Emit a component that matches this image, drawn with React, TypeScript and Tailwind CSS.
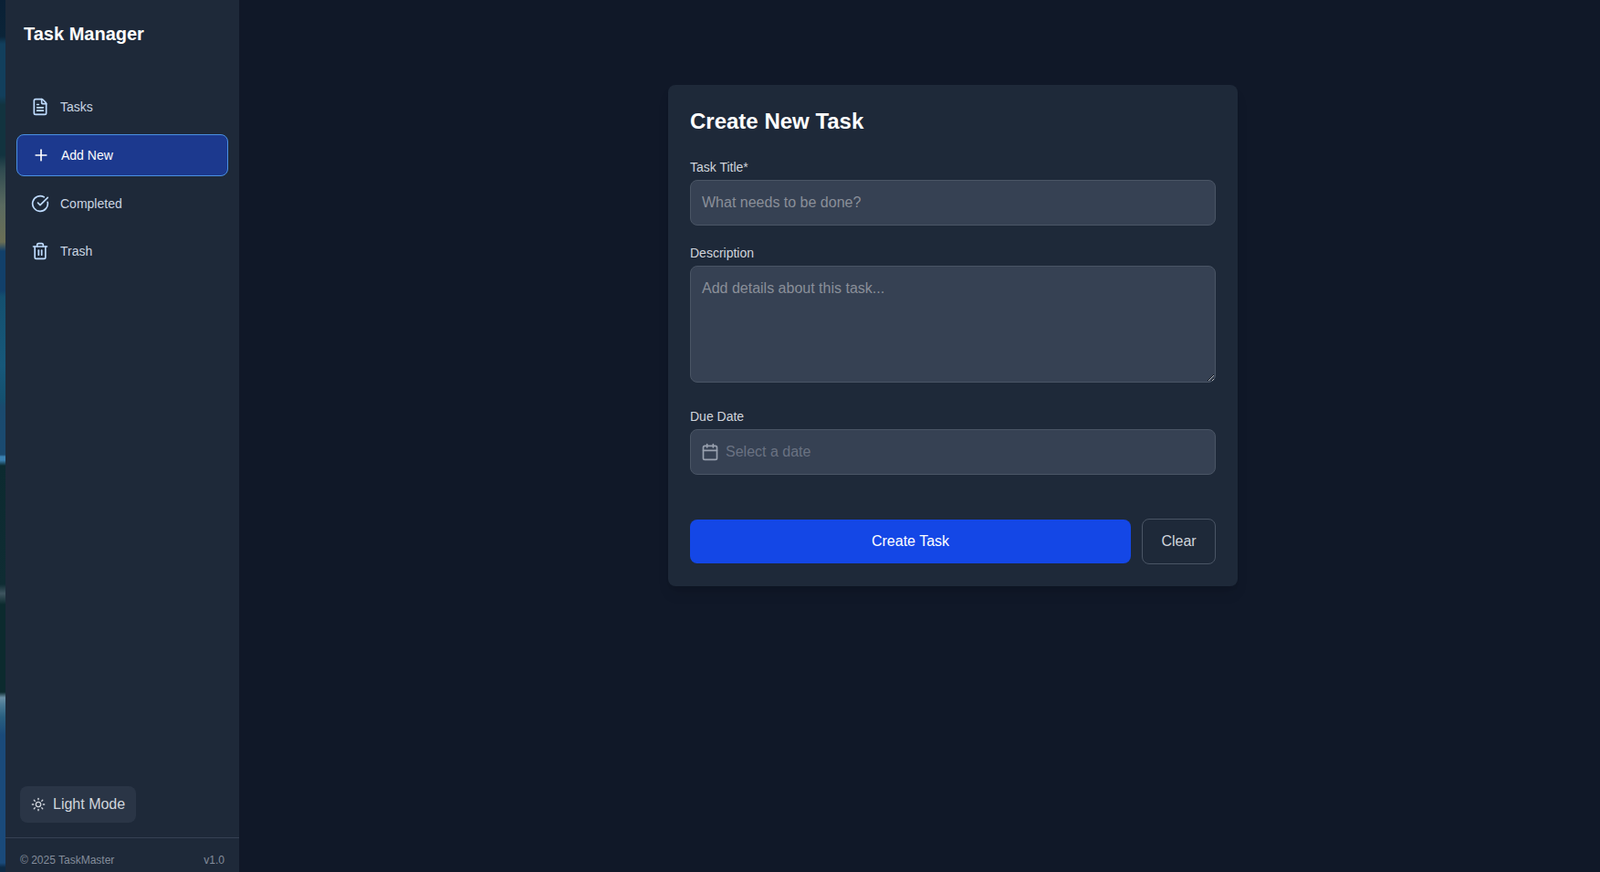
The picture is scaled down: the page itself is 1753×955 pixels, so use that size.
import { FileText, Plus, CircleCheckBig, Trash2, Sun, Calendar } from "lucide-react";

const strip =
  "bg-[linear-gradient(180deg,#0a2035_0px,#0b2438_40px,#123f5c_48px,#123f5c_105px,#12333f_115px,#12333f_170px,#2f4a50_185px,#5a6a60_225px,#6b6f55_265px,#12406a_275px,#12406a_318px,#14506f_325px,#17587a_400px,#14506f_438px,#1a4a6e_445px,#1a4a70_498px,#3a80b0_500px,#3a80b0_504px,#0c2a30_510px,#0f2c33_640px,#3f5560_650px,#0c2a2e_662px,#0c2a2e_758px,#6a8fa5_764px,#4a7a95_772px,#2a6080_785px,#1a4a7a_805px,#1a4a7a_945px,#0d2a45_950px,#0d2a45_955px)]";

function NavItem({ icon, label, active }: { icon: React.ReactNode; label: string; active?: boolean }) {
  return (
    <a
      className={
        active
          ? "flex items-center gap-3 h-[46px] px-4 rounded-lg border border-[#4a90e2] bg-blue-900 text-white text-sm"
          : "flex items-center gap-3 h-[44px] px-4 rounded-lg text-slate-300 text-sm"
      }
    >
      {icon}
      <span>{label}</span>
    </a>
  );
}

const Field = ({ label, children, className }: { label: string; children: React.ReactNode; className: string }) => (
  <div className={className}>
    <label className="block text-sm leading-5 text-gray-300 mb-1">{label}</label>
    {children}
  </div>
);

export default function App() {
  const inputCls =
    "block w-full h-[50px] bg-gray-700 border border-gray-600 rounded-lg text-base text-white outline-none";
  return (
    <div className="flex h-[955px] overflow-hidden bg-gray-900 font-['Liberation_Sans',Arial,sans-serif]">
      <div className={`w-[6px] shrink-0 ${strip}`} />
      <aside className="w-[256px] shrink-0 flex flex-col bg-gray-800">
        <div className="px-5 pt-[23px] pb-[44px]">
          <h1 className="text-xl leading-7 font-bold text-white">Task Manager</h1>
        </div>
        <nav className="flex flex-col gap-2 px-3">
          <NavItem icon={<FileText size={20} className="text-blue-200" />} label="Tasks" />
          <NavItem icon={<Plus size={20} className="text-white" />} label="Add New" active />
          <NavItem icon={<CircleCheckBig size={20} className="text-blue-200" />} label="Completed" />
          <NavItem icon={<Trash2 size={20} className="text-blue-200" />} label="Trash" />
        </nav>
        <div className="mt-auto px-4 pb-4">
          <button className="flex items-center gap-2 h-10 px-3 rounded-lg bg-gray-700/50 text-gray-300 text-base">
            <Sun size={16} />
            <span>Light Mode</span>
          </button>
        </div>
        <div className="h-[38px] px-4 pt-4 border-t border-gray-700 flex items-start justify-between text-xs text-[#848d9b]">
          <span>© 2025 TaskMaster</span>
          <span>v1.0</span>
        </div>
      </aside>
      <main className="flex-1 pt-[93px] pl-[470px]">
        <div className="w-[624px] h-[549px] p-6 bg-gray-800 rounded-lg shadow-lg">
          <h2 className="text-2xl font-bold text-white mb-6">Create New Task</h2>
          <Field label="Task Title*" className="mb-5">
            <input className={`${inputCls} px-3 placeholder:text-[#8a8f99]`} placeholder="What needs to be done?" />
          </Field>
          <Field label="Description" className="mb-[27px]">
            <textarea
              className="block w-full h-[128px] px-3 py-3 bg-gray-700 border border-gray-600 rounded-lg text-base text-white placeholder:text-[#8a8f99] outline-none resize-y"
              placeholder="Add details about this task..."
            />
          </Field>
          <Field label="Due Date" className="mb-12">
            <div className="relative">
              <Calendar size={20} className="absolute left-3 top-[15px] text-gray-400" />
              <input className={`${inputCls} pl-[38px] pr-3 placeholder:text-gray-500`} placeholder="Select a date" />
            </div>
          </Field>
          <div className="flex items-center gap-3">
            <button className="flex-1 h-12 rounded-lg bg-blue-700 text-white text-base">Create Task</button>
            <button className="w-[81px] h-[50px] rounded-lg border border-gray-600 text-gray-300 text-base">Clear</button>
          </div>
        </div>
      </main>
    </div>
  );
}
